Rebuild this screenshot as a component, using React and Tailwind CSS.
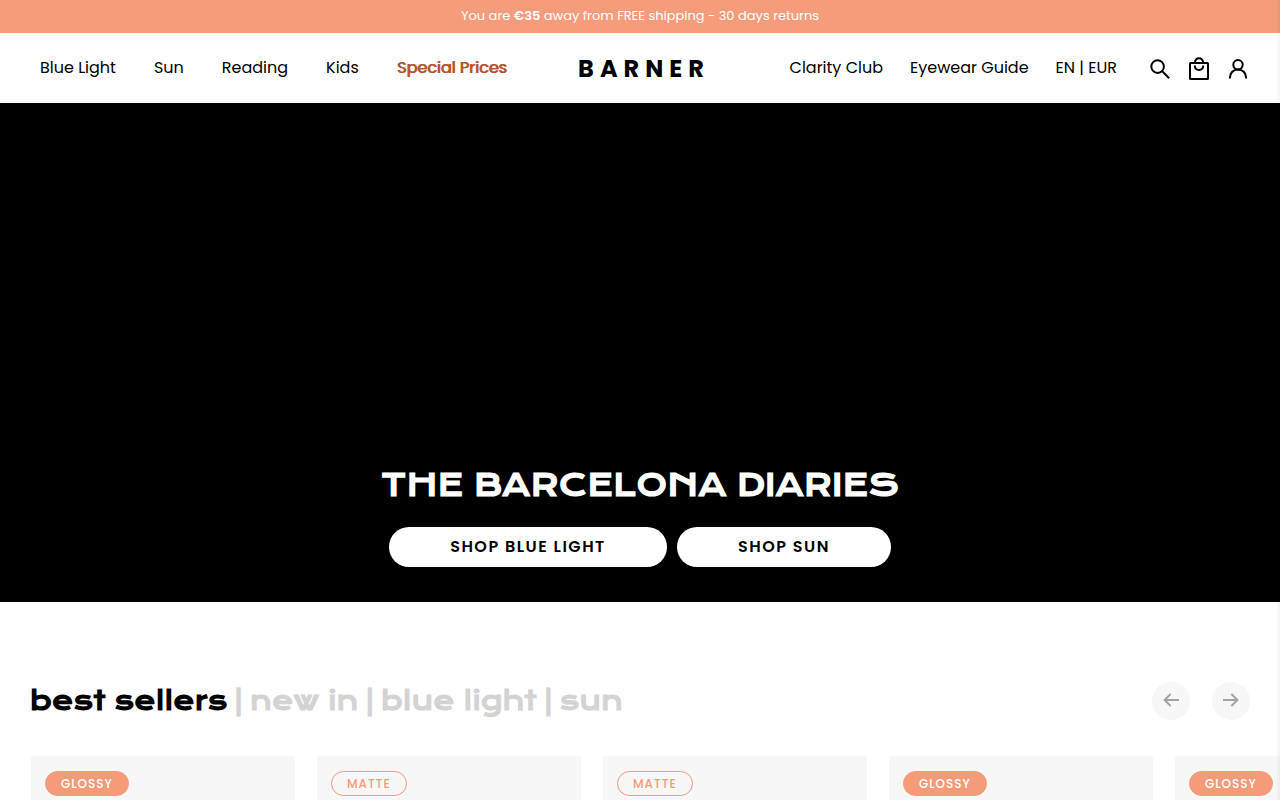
import React, { useState } from "react";

const leftLinks = ["Blue Light", "Sun", "Reading", "Kids"];
const rightLinks = ["Clarity Club", "Eyewear Guide", "EN | EUR"];
const tabs = ["best sellers", "new in", "blue light", "sun"];
const finishes = ["GLOSSY", "MATTE", "MATTE", "GLOSSY", "GLOSSY"];

function SearchIcon() {
  return (
    <svg width="20" height="20" viewBox="0 0 20 20" fill="none" stroke="currentColor" strokeWidth="2" aria-hidden="true">
      <circle cx="7.6" cy="7.6" r="6.3" />
      <path d="M12.2 12.2 19.2 19.2" />
    </svg>
  );
}

function BagIcon() {
  return (
    <svg width="20" height="24" viewBox="0 0 20 24" fill="none" stroke="currentColor" strokeWidth="2" aria-hidden="true">
      <rect x="1" y="6" width="18" height="16" rx="0.6" />
      <path d="M5.8 6C6.1 2.900 7.4 1.300 10 1.300s3.900 1.600 4.200 4.700" />
      <path d="M5.800 8.600c0 2.800 1.500 4.400 4.200 4.400s4.200-1.600 4.200-4.400" />
    </svg>
  );
}

function AccountIcon() {
  return (
    <svg width="20" height="20" viewBox="0 0 20 20" fill="none" stroke="currentColor" strokeWidth="2" aria-hidden="true">
      <circle cx="10" cy="5.700" r="4.700" />
      <path d="M1.800 19.400c0-5.200 3.200-8.900 8.200-8.900s8.200 3.700 8.200 8.900" />
    </svg>
  );
}

function ArrowIcon({ flip }) {
  return (
    <svg className={flip ? "rotate-180" : ""} width="16" height="14" viewBox="0 0 16 14" fill="none" stroke="currentColor" strokeWidth="2" aria-hidden="true">
      <path d="M16 7H1.8M7.6 1 1.600 7l6 6" />
    </svg>
  );
}

function FinishBadge({ finish }) {
  const look = finish === "GLOSSY" ? "bg-[#f59b7a] text-white" : "text-[#f59b7a]";
  return (
    <span className={"flex h-[25px] w-fit items-center rounded-full border border-[#f59b7a] px-[15px] text-xs font-medium tracking-[1px] " + look}>
      {finish}
    </span>
  );
}

export default function App() {
  const [active, setActive] = useState(0);
  return (
    <div className="overflow-hidden bg-white font-['Poppins','Inter',sans-serif] text-black">
      <div className="flex h-[33px] items-center justify-center bg-[#f59c7c] pb-[2px] text-[13px] text-white">
        <p>
          You are <strong className="font-semibold">€35</strong> away from FREE shipping - 30 days returns
        </p>
      </div>

      <header className="grid h-[70px] grid-cols-[1fr_auto_1fr] items-center pr-8 pl-10">
        <nav aria-label="Shop" className="flex gap-[38px] whitespace-nowrap">
          {leftLinks.map((l) => (
            <a key={l} href="#">{l}</a>
          ))}
          <a href="#" className="text-[#b5532a] [text-shadow:1px_0_0_#b5532a]">Special Prices</a>
        </nav>
        <a href="#" className="pt-px text-2xl leading-6 font-bold tracking-[6px]">BARNER</a>
        <div className="flex items-center justify-end gap-[33px] whitespace-nowrap">
          <nav aria-label="Help" className="flex gap-[27px]">
            {rightLinks.map((l) => (
              <a key={l} href="#">{l}</a>
            ))}
          </nav>
          <div className="flex items-center gap-[19px] pt-px">
            <button aria-label="Search"><SearchIcon /></button>
            <button aria-label="Cart"><BagIcon /></button>
            <button aria-label="Account"><AccountIcon /></button>
          </div>
        </div>
      </header>

      <section className="flex min-h-[499px] flex-col items-center justify-end gap-[22px] bg-black pb-[35px]">
        <h1 className="text-[31px] leading-10 font-bold text-white font-['Krona_One','DejaVu_Sans',sans-serif]">THE BARCELONA DIARIES</h1>
        <div className="flex gap-[10px] font-semibold tracking-[1.5px]">
          <a href="#" className="flex h-10 w-[278px] items-center justify-center rounded-full bg-white">SHOP BLUE LIGHT</a>
          <a href="#" className="flex h-10 w-[214px] items-center justify-center rounded-full bg-white">SHOP SUN</a>
        </div>
      </section>

      <section className="pt-20">
        <div className="flex items-center justify-between px-[30px]">
          <h2 className="flex gap-[7px] text-[26px] leading-[38px] font-bold text-[#d3d3d3] font-['Krona_One','DejaVu_Sans',sans-serif]">
            {tabs.map((t, i) => (
              <React.Fragment key={t}>
                {i > 0 && <span>|</span>}
                <button onClick={() => setActive(i)} className={i === active ? "text-black" : ""}>{t}</button>
              </React.Fragment>
            ))}
          </h2>
          <div className="flex gap-[22px] text-[#a3a3a3]">
            <button aria-label="Previous" className="flex size-[38px] items-center justify-center rounded-full bg-[#f7f7f7] pb-[3px]"><ArrowIcon /></button>
            <button aria-label="Next" className="flex size-[38px] items-center justify-center rounded-full bg-[#f7f7f7] pb-[3px]"><ArrowIcon flip /></button>
          </div>
        </div>
        <ul className="mt-9 flex gap-[22px] overflow-hidden pl-[31px]">
          {finishes.map((f, i) => (
            <li key={i} className="min-h-[340px] w-[264px] shrink-0 bg-[#f7f7f7] px-[14px] pt-[15px]">
              <FinishBadge finish={f} />
            </li>
          ))}
        </ul>
      </section>

      <div className="pointer-events-none fixed inset-y-0 right-0 w-1 bg-linear-to-l from-black/5 to-transparent" />
    </div>
  );
}
